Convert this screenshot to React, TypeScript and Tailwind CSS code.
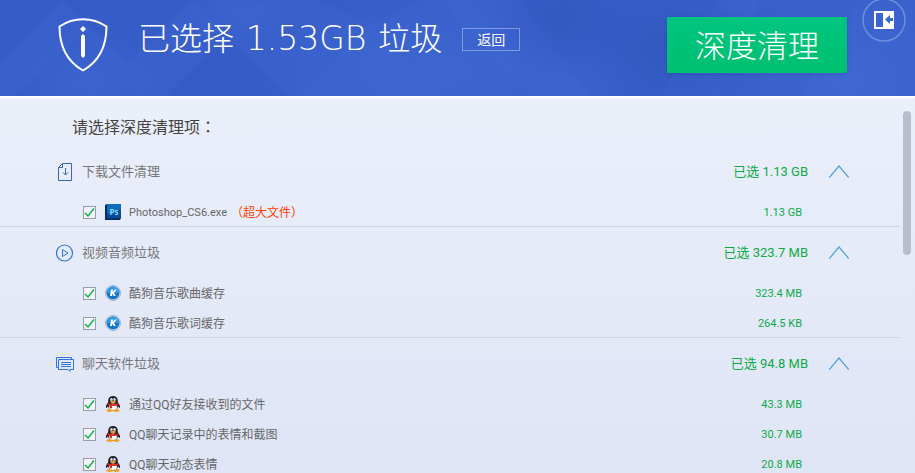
import React, { useState } from 'react';

type IconName = 'download' | 'video' | 'chat' | 'photoshop' | 'kugou' | 'qq';

interface JunkItem {
  id: string;
  name: string;
  size: string;
  icon: IconName;
  note?: string;
}

interface JunkGroup {
  id: string;
  title: string;
  selected: string;
  icon: IconName;
  items: JunkItem[];
}

const groups: JunkGroup[] = [
  {
    id: 'download',
    title: '下载文件清理',
    selected: '1.13 GB',
    icon: 'download',
    items: [
      { id: 'ps', name: 'Photoshop_CS6.exe', size: '1.13 GB', icon: 'photoshop', note: '（超大文件）' },
    ],
  },
  {
    id: 'media',
    title: '视频音频垃圾',
    selected: '323.7 MB',
    icon: 'video',
    items: [
      { id: 'song', name: '酷狗音乐歌曲缓存', size: '323.4 MB', icon: 'kugou' },
      { id: 'lyric', name: '酷狗音乐歌词缓存', size: '264.5 KB', icon: 'kugou' },
    ],
  },
  {
    id: 'chat',
    title: '聊天软件垃圾',
    selected: '94.8 MB',
    icon: 'chat',
    items: [
      { id: 'qq-file', name: '通过QQ好友接收到的文件', size: '43.3 MB', icon: 'qq' },
      { id: 'qq-shot', name: 'QQ聊天记录中的表情和截图', size: '30.7 MB', icon: 'qq' },
      { id: 'qq-face', name: 'QQ聊天动态表情', size: '20.8 MB', icon: 'qq' },
    ],
  },
];

const GroupIcon: React.FC<{ name: IconName }> = ({ name }) => {
  if (name === 'download') {
    return (
      <svg width="18" height="18" viewBox="0 0 18 18" fill="none" stroke="#3d66b2" aria-hidden="true">
        <path d="M6.500 .5h9v17h-13v-13z M6.500 .5v4h-4" />
        <path d="M9.500 5v7 M7 9.500l2.500 2.500 2.500-2.500" />
      </svg>
    );
  }
  if (name === 'video') {
    return (
      <svg width="18" height="18" viewBox="0 0 18 18" fill="none" stroke="#2e76dc" aria-hidden="true">
        <circle cx="8.500" cy="9" r="8" strokeWidth="1.200" />
        <path d="M6.500 5.500v7l5.500-3.500z" strokeLinejoin="round" />
      </svg>
    );
  }
  return (
    <svg width="18" height="18" viewBox="0 0 18 18" fill="none" stroke="#2e76dc" aria-hidden="true">
      <path d="M2.500 12.500h-2v-10h15v2" />
      <path d="M2.500 4.500h15v10h-3.500v2l-2-2h-9.500z" />
      <path d="M5 7.500h10 M5 9.500h10 M5 11.500h10" />
    </svg>
  );
};

const AppIcon: React.FC<{ name: IconName }> = ({ name }) => {
  if (name === 'photoshop') {
    return (
      <svg width="16" height="16" viewBox="0 0 16 16" aria-hidden="true">
        <path d="M0 1l2-1h14v14l-1 2H0z" fill="#062f66" />
        <path d="M2 0h14v14H2z" fill="#0a4a96" />
        <path d="M2 0h14v5L2 10z" fill="#0d6dbb" />
        <text x="9" y="11" textAnchor="middle" fontSize="8" fontWeight="700" fill="#7fe0ff" className="font-['Open_Sans',sans-serif]">
          Ps
        </text>
      </svg>
    );
  }
  if (name === 'kugou') {
    return (
      <svg width="16" height="16" viewBox="0 0 16 16" aria-hidden="true">
        <circle cx="8" cy="8" r="7.500" fill="#dce6ee" stroke="#a3b2c2" />
        <circle cx="8" cy="8" r="6.500" fill="#1474c8" />
        <path d="M1.500 8a6.500 6.500 0 0 1 13 0z" fill="#2f97e4" />
        <path d="M6 4.500h2l-.5 2.500 2.300-2.500h2.200l-3 3.200 1.800 3.300h-2.200l-1.200-2.500-.4 2.500H5z" fill="#fff" />
      </svg>
    );
  }
  return (
    <svg width="16" height="16" viewBox="0 0 16 16" aria-hidden="true">
      <path d="M3.500 6C2 7.500.6 10 1 11.800c.6.500 1.300-.6 1.800-1.200h10.400c.5.600 1.200 1.700 1.800 1.200.4-1.800-1-4.300-2.500-5.800z" fill="#1b1b22" />
      <path d="M8 0C5 0 3.200 2 3.200 4.800v4.700C3.200 12.500 5 15 8 15s4.800-2.500 4.800-5.500V4.800C12.800 2 11 0 8 0z" fill="#20202a" />
      <ellipse cx="8" cy="11" rx="3.900" ry="3.500" fill="#fff" />
      <ellipse cx="6.500" cy="3.600" rx="1.200" ry="1.600" fill="#fff" />
      <ellipse cx="9.500" cy="3.600" rx="1.200" ry="1.600" fill="#fff" />
      <circle cx="6.900" cy="3.900" r=".5" fill="#111" />
      <circle cx="9.100" cy="3.900" r=".5" fill="#111" />
      <ellipse cx="8" cy="6" rx="3" ry="1" fill="#f6a623" />
      <path d="M2.700 7c3 1.600 7.600 1.600 10.600 0l.3 1.700c-2 1.100-4.600 1.400-6.600 1.200v2.400H4.800V9.600c-.8-.2-1.700-.5-2.400-.9z" fill="#e3261b" />
      <ellipse cx="4.600" cy="14.600" rx="3.200" ry="1.400" fill="#f0a01e" />
      <ellipse cx="11.400" cy="14.600" rx="3.200" ry="1.400" fill="#f0a01e" />
    </svg>
  );
};

const HeaderBackdrop: React.FC = () => (
  <svg
    className="absolute inset-0 h-full w-full"
    viewBox="0 0 915 96"
    preserveAspectRatio="none"
    aria-hidden="true"
  >
    <defs>
      <radialGradient id="glow">
        <stop offset="0" stopColor="#4a77e0" stopOpacity=".3" />
        <stop offset="1" stopColor="#4a77e0" stopOpacity="0" />
      </radialGradient>
      <radialGradient id="shade">
        <stop offset="0" stopColor="#2748ae" stopOpacity=".35" />
        <stop offset="1" stopColor="#2748ae" stopOpacity="0" />
      </radialGradient>
    </defs>
    <g fill="#2a4fb8" fillOpacity=".12">
      <path d="M0 0h62l-62 62z" />
      <path d="M62 0h130l-65 65z" />
      <path d="M192 0h70l-35 35z" />
      <path d="M15 96l65-60 60 60z" />
      <path d="M165 96l62-60 62 60z" />
      <path d="M370 24l-50-24h100z" />
    </g>
    <g fill="#5a86ea" fillOpacity=".07">
      <path d="M300 96l70-72 70 72z" />
      <path d="M440 0l90 96h60l-70-96z" />
      <path d="M720 0l-60 96h60l40-96z" />
      <path d="M860 0l-60 96h115V0z" />
    </g>
    <ellipse cx="90" cy="82" rx="80" ry="50" fill="url(#glow)" />
    <ellipse cx="240" cy="12" rx="60" ry="30" fill="url(#glow)" />
    <ellipse cx="440" cy="70" rx="200" ry="90" fill="url(#glow)" />
    <ellipse cx="850" cy="80" rx="120" ry="90" fill="url(#glow)" />
    <ellipse cx="560" cy="20" rx="80" ry="60" fill="url(#shade)" />
    <ellipse cx="670" cy="50" rx="90" ry="70" fill="url(#shade)" />
  </svg>
);

const Group: React.FC<{ group: JunkGroup }> = ({ group }) => {
  const [open, setOpen] = useState(true);

  return (
    <section className="border-b border-[#d2d4e3]">
      <div className="flex h-[50px] items-center pt-0.5 pr-[51px] pl-14">
        <GroupIcon name={group.icon} />
        <h3 className="ml-2 text-[13px] text-[#777]">{group.title}</h3>
        <span className="ml-auto text-[13px] text-[#0cab45]">已选 {group.selected}</span>
        <button
          type="button"
          aria-label={group.title}
          aria-expanded={open}
          onClick={() => setOpen(!open)}
          className="ml-[21px] cursor-pointer"
        >
          <svg
            width="20"
            height="14"
            viewBox="0 0 20 14"
            fill="none"
            stroke="#4a9fe0"
            strokeWidth="1.200"
            className={open ? '' : 'rotate-180'}
          >
            <path d="M.3 12.500L10 1l9.700 11.500" />
          </svg>
        </button>
      </div>
      {open && (
        <ul className="-mb-px pt-px">
          {group.items.map((item) => (
            <li key={item.id} className="flex h-[30px] items-center pr-[98px] pl-[83px] text-xs">
              <span className="relative flex">
                <input
                  id={item.id}
                  type="checkbox"
                  defaultChecked
                  className="peer h-[13px] w-[13px] appearance-none border border-[#9a9eaa] bg-[#f3f5f8]"
                />
                <svg
                  width="13"
                  height="13"
                  viewBox="0 0 13 13"
                  fill="none"
                  stroke="#12b04c"
                  strokeWidth="1.500"
                  className="pointer-events-none absolute inset-0 hidden peer-checked:block"
                >
                  <path d="M2 7l3 3 6-7.500" />
                </svg>
              </span>
              <label htmlFor={item.id} className="ml-[9px] flex items-center text-[#666]">
                <AppIcon name={item.icon} />
                <span className={item.icon === 'photoshop' ? 'ml-2 pt-0.5 text-[11px]' : 'ml-2 pt-0.5'}>{item.name}</span>
                {item.note && <span className="ml-1 pt-0.5 text-[#ff4200]">{item.note}</span>}
              </label>
              <span className="ml-auto pt-0.5 text-[11px] text-[#0cab45]">{item.size}</span>
            </li>
          ))}
        </ul>
      )}
    </section>
  );
};

export default function App() {
  return (
    <div className="flex h-screen flex-col overflow-hidden bg-[#e7ecf8] font-['Roboto','Noto_Sans_CJK_SC',sans-serif]">
      <header className="relative flex h-24 shrink-0 items-start bg-[#385fca] pt-[17px] pr-[68px] pl-[58px] text-white">
        <HeaderBackdrop />
        <svg className="relative shrink-0" width="50" height="56" viewBox="0 0 50 56" fill="none" aria-hidden="true">
          <path
            d="M1.500 9.500C9 4.500 17 2.300 25 2.300s16 2.200 23.500 7.200C48.500 31 40 45 25 53.500 10 45 1.500 31 1.500 9.500z"
            stroke="#fff"
            strokeWidth="2"
          />
          <path d="M25 9l3 3-3 3-3-3z M25 17l2 2v20l-2 2-2-2V19z" fill="#fff" />
        </svg>
        <h1 className="relative ml-[30px] text-[32px] leading-[44px] font-light whitespace-nowrap">
          已选择 <span className="mx-1 font-['DejaVu_Sans',sans-serif] text-[33px] font-extralight">1.53GB</span> 垃圾
        </h1>
        <button
          type="button"
          className="relative mt-[11px] ml-5 h-[23px] w-[58px] shrink-0 cursor-pointer border border-[#7f99df] text-sm leading-5"
        >
          返回
        </button>
        <button
          type="button"
          className="relative ml-auto h-14 w-[180px] shrink-0 cursor-pointer rounded-[1px] bg-linear-to-b from-[#00c581] to-[#00c070] pt-1 text-[31px] font-light shadow-[0_1px_4px_rgba(20,50,140,0.2)]"
        >
          深度清理
        </button>
        <button type="button" aria-label="收起" className="absolute -top-0.5 right-2 cursor-pointer">
          <svg width="46" height="46" viewBox="0 0 46 46" fill="none">
            <circle cx="23" cy="22" r="21" stroke="#6d8cdf" strokeWidth="1.500" />
            <path d="M13 13h20v18H13z" fill="#fff" />
            <path d="M15 15h7v14h-7z M24 21.500l5-4.500v3h3v3h-3v3z" fill="#3b66d0" />
          </svg>
        </button>
      </header>

      <main className="flex min-h-0 flex-1 border-t-2 border-white bg-linear-to-b from-[#ebeffa] to-[#dfe5f6]">
        <div className="min-w-0 flex-1 overflow-y-auto [scrollbar-width:none]">
          <h2 className="h-12 pt-4 pl-[72px] text-base leading-6 text-[#444]">
            请选择深度清理项<span className="font-['Noto_Sans_CJK_TC',sans-serif]">：</span>
          </h2>
          {groups.map((group) => (
            <Group key={group.id} group={group} />
          ))}
        </div>
        <div className="w-[15px] shrink-0 pt-[13px] pl-[3px]">
          <div className="h-36 w-2 rounded-full bg-[#babeca]" />
        </div>
      </main>
    </div>
  );
}
